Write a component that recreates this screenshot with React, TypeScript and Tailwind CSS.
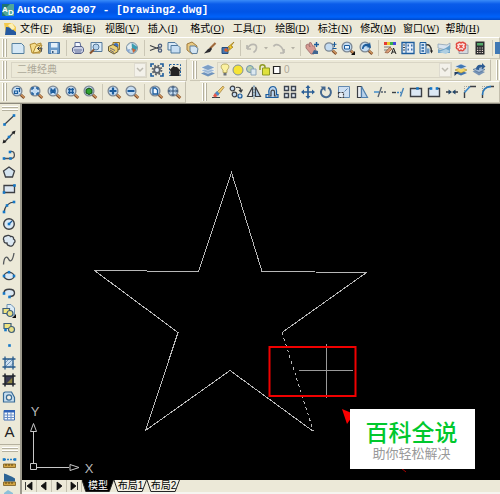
import type { ReactNode } from 'react';
import { clsx } from 'clsx';

type ToolItem = { label: string; art: ReactNode };

const MENUS = [
  ['文件', 'F'],
  ['编辑', 'E'],
  ['视图', 'V'],
  ['插入', 'I'],
  ['格式', 'O'],
  ['工具', 'T'],
  ['绘图', 'D'],
  ['标注', 'N'],
  ['修改', 'M'],
  ['窗口', 'W'],
  ['帮助', 'H'],
];

const BLUE = '#1c5c9c';
const INK = '#3c3f44';
const PALE = '#c9ddf0';

function Lens({ children, small = false }: { children?: ReactNode; small?: boolean }) {
  return (
    <>
      <path d="M10.500 10.500 14.300 14" stroke="#7a4a28" strokeWidth="2.800" />
      <path d="M11 10.500 14.500 13.700" stroke="#d49a62" strokeWidth="1.300" />
      <circle cx="7" cy="7" r={small ? 4.2 : 4.9} fill="#c4dcf2" stroke="#7d8894" strokeWidth="1.300" />
      {children}
    </>
  );
}

function Dots({ at }: { at: [number, number][] }) {
  return (
    <>
      {at.map(([x, y]) => (
        <rect key={`${x}-${y}`} x={x - 1.3} y={y - 1.3} width="2.6" height="2.6" fill="#1478c8" stroke="none" />
      ))}
    </>
  );
}

const FILE_TOOLS: ToolItem[] = [
  {
    label: '新建',
    art: <path d="M2 3.500h9.500l2.500 2.500v7.500H2z" fill="#d5e8f6" stroke="#56809f" />,
  },
  {
    label: '打开',
    art: (
      <>
        <path d="M2 4.500 7 3l1 1.500 5-1.500-1 10H4z" fill="#f5dc8a" stroke="#b08a32" />
        <path d="M5 13 8 6l6-1-3 7z" fill="#fbe9a8" stroke="#b08a32" />
        <path d="M14 8 9.500 8.500M14 8l-1 4M9.500 8.500l2-2M9.500 8.500l2 2" stroke={INK} />
      </>
    ),
  },
  {
    label: '保存',
    art: (
      <>
        <path d="M2.500 2.500h11v11h-11z" fill="#6b9bca" stroke="#4a76a4" />
        <path d="M5 3h6.500v4.500H5z" fill="#e4f0fa" />
        <path d="M5 10h6v3.500H5z" fill="#d5e3ef" />
        <path d="M6 11h1.500v2H6z" fill="#35587c" />
      </>
    ),
  },
];

const PRINT_TOOLS: ToolItem[] = [
  {
    label: '打印',
    art: (
      <>
        <path d="M5 2.500h5l1 5H5z" fill="#f3f7ff" stroke="#5c6c98" />
        <path d="M2.500 8 5 6.500h7l1.500 2v3L11 13.500H4.500l-2-2z" fill="#c9cfe4" stroke="#566189" />
        <path d="M4 10h8M5 12h6" stroke="#69749b" />
      </>
    ),
  },
  {
    label: '打印预览',
    art: (
      <>
        <path d="M3 2.500h11v9H3z" fill="#dcecf8" stroke="#54789a" />
        <circle cx="8" cy="7" r="3" fill="#b7d4ee" stroke="#54789a" />
        <path d="m6 9.500-4 4" stroke="#8a5430" strokeWidth="2" />
      </>
    ),
  },
  {
    label: '发布',
    art: (
      <>
        <path d="M7 2.500h6.500v7H7z" fill="#f4d67a" stroke="#9a7624" />
        <circle cx="10" cy="5.500" r="2.500" fill="#3c6fc0" />
        <path d="M2.500 6.500 7 4.500l5 3v4L8 14l-5.500-3z" fill="#e9cf74" stroke="#655a3a" />
        <path d="m4 8 5 2.500M4 10l4 2.500" stroke="#6d6a80" />
      </>
    ),
  },
  {
    label: '三维 DWF',
    art: (
      <>
        <circle cx="8" cy="8" r="5.500" fill="#b9d6e6" stroke="#8092a0" />
        <path d="M8 3.500 13.500 7 11 12 7 9z" fill="#3b9db0" />
        <path d="M3 6.500 7 3l1 5-3 3z" fill="#e6eef2" />
        <path d="m8 8 1 5 3-3z" fill="#cf6436" />
        <path d="m2 10 4-1-1 4z" fill="#86a6d0" />
      </>
    ),
  },
];

const EDIT_TOOLS: ToolItem[] = [
  {
    label: '剪切',
    art: (
      <>
        <path d="M2 5.500 11 9M2 10.500 11 7" stroke={INK} strokeWidth="1.300" />
        <circle cx="12" cy="5.800" r="1.600" fill="none" stroke="#475a7c" strokeWidth="1.300" />
        <circle cx="12" cy="10.500" r="1.600" fill="none" stroke="#475a7c" strokeWidth="1.300" />
      </>
    ),
  },
  {
    label: '复制',
    art: (
      <>
        <path d="M2 2.500h7l2 2V10H2z" fill="#d8e9f7" stroke="#4f789c" />
        <path d="M5 5.500h7l2 2V13H5z" fill="#c7def2" stroke="#4f789c" />
      </>
    ),
  },
  {
    label: '粘贴',
    art: (
      <>
        <path d="m3 4 5-2 5 4-1 6-4 2-5-4z" fill="#e8c980" stroke="#a07a3c" />
        <path d="M6 6h5l3 2.500-1 5H8L6 11z" fill="#d4e5f3" stroke="#607f9a" />
      </>
    ),
  },
  {
    label: '特性匹配',
    art: (
      <>
        <path d="M13.500 3 8 8.500" stroke="#a06a3c" strokeWidth="2.200" />
        <path d="M9 7.500 6 9l-4 4.500L8 12l2-3z" fill="#2c2c30" />
      </>
    ),
  },
  {
    label: '块编辑器',
    art: (
      <>
        <path d="M2 7.500h6v6H2z" fill="#4476b4" stroke="#274c7c" />
        <path d="m14 2-6 5 2 1-3 4 6-5-2-1z" fill="#f5cc2c" stroke="#9a7310" strokeWidth=".7" />
        <circle cx="6" cy="10" r="1.800" fill="#d95d2a" />
      </>
    ),
  },
];

const UNDO: ToolItem = {
  label: '放弃',
  art: <path d="M3 9V5m0 4h4M3.500 8.500C6 3 13 3 12.500 8c0 2-1.500 3.500-3 4.500" fill="none" stroke="#b9b7b0" strokeWidth="1.700" />,
};

const REDO: ToolItem = {
  label: '重做',
  art: <path d="M13 13V9m0 4H9m3.500-.500C12 6 5 2 2.500 6.500" fill="none" stroke="#b9b7b0" strokeWidth="1.700" />,
};

const VIEW_TOOLS: ToolItem[] = [
  {
    label: '实时平移',
    art: (
      <>
        <path d="M2 5 4 4l2 3-1-4 2-.500 2 4 1-1 2 5-2 3.500H7L2 8z" fill="#d79a92" stroke="#9d6a68" strokeWidth=".8" />
        <path d="M12.500 2v5M10 4.500h5" stroke={BLUE} strokeWidth="1.400" />
        <path d="m8 14 2-4 4 1v3z" fill="#3f6692" />
      </>
    ),
  },
  {
    label: '实时缩放',
    art: (
      <Lens small>
        <path d="M12.500 2v5M10.500 4.300h4M10.500 8.500h4" stroke={BLUE} />
      </Lens>
    ),
  },
  {
    label: '窗口缩放',
    art: (
      <Lens>
        <path d="M4.500 5.500h5v3.500h-5z" fill="#e9f4ff" stroke={BLUE} />
        <path d="M15 11v4h-4z" fill="#111" />
      </Lens>
    ),
  },
  {
    label: '缩放上一个',
    art: (
      <Lens>
        <path d="M4 9c0-5 4-6 7-5l1-2 1 6-5-1 2-1c-3-.500-4 .500-4.500 3z" fill={BLUE} />
      </Lens>
    ),
  },
];

const PALETTE_TOOLS: ToolItem[] = [
  {
    label: '特性',
    art: (
      <>
        <path d="M2 2h3v3H2z" fill="#e63a32" />
        <path d="M5 2h3v3H5z" fill="#e8c92e" />
        <path d="M8 2h3v3H8z" fill="#36b04a" />
        <path d="M11 2h3v3h-3z" fill="#4748dc" />
        <path d="M2 7h7M2 10h4" stroke="#777" />
        <path d="M3 12.500 8 7l2 2-4 4z" fill="#d99d78" stroke="#8a563a" strokeWidth=".7" />
        <path d="m9.500 14 2-6 2.500 6m-4-2h3" fill="none" stroke="#222" />
      </>
    ),
  },
  {
    label: '设计中心',
    art: (
      <>
        <path d="M2 2.500h12v11H2z" fill="#e4eef9" stroke={BLUE} strokeWidth="1.300" />
        <path d="M6 3v10" stroke={BLUE} />
        <path d="M3 5h2M3 7.500h2M3 10h2" stroke="#444" />
        <path d="M7.500 4.500H9v2H7.500zM11 4.500h1.500v2H11zM7.500 8.500H9v2H7.500zM11 8.500h1.500v2H11z" fill="#3d6fae" />
      </>
    ),
  },
  {
    label: '工具选项板',
    art: (
      <>
        <path d="M2 2.500h6v11H2z" fill="#d5e5f5" stroke={BLUE} />
        <path d="M3.500 5H6M3.500 8H6M3.500 11H6" stroke={BLUE} strokeWidth="1.500" />
        <path d="M8 5c3-1 5 1 5.500 6" fill="none" stroke="#333" strokeWidth="1.300" />
        <path d="M9 8.500h2.500v5H9z" fill="#6e9bc8" />
        <path d="M12 10.500h3l-1.500 3z" fill="#222" />
      </>
    ),
  },
  {
    label: '图纸集',
    art: (
      <>
        <path d="m2 4 9 1 3-2v6l-4 1-8-2z" fill="#d8e3ee" stroke="#8ea3b6" strokeWidth=".8" />
        <path d="M2 9c4 2 8-1 12-4v8H2z" fill="#6fa3c8" />
        <path d="m3 12 7-3 4 2-4 3z" fill="#afcfe2" />
      </>
    ),
  },
  {
    label: '标记集',
    art: (
      <>
        <path d="M5 5h9v8.500H5z" fill="#d5d9df" stroke="#9b9fa8" />
        <path d="M4 3c1-1 2-1 3 0 1-1 3-1 3 0 2 0 2 2 1 3 1 2 0 3-1 3 0 2-2 2-3 1-1 1-3 1-3-1-2 0-2-2-1-3-1-1-1-3 1-3z" fill="#fbe3e0" stroke="#e2483f" strokeWidth="1.500" />
        <path d="m5.500 5 3 3m0-3-3 3" stroke="#e2483f" strokeWidth="1.300" />
      </>
    ),
  },
  {
    label: '快速计算器',
    art: (
      <>
        <path d="M3.500 1.500h9v13h-9z" fill="#2c2c2e" />
        <path d="M5 3h6v2.500H5z" fill="#52a868" />
        <path d="M5 8h6M5 10.300h6M5 12.500h6" stroke="#e9d9d4" strokeWidth="1.200" strokeDasharray="1.200 1.200" />
      </>
    ),
  },
];

const WORKSPACE_TOOLS: ToolItem[] = [
  {
    label: '工作空间设置',
    art: (
      <>
        <path d="M2 5V2h3M11 2h3v3M14 11v3h-3M5 14H2v-3" fill="none" stroke={BLUE} strokeWidth="1.600" />
        <circle cx="8" cy="8" r="4.400" fill="none" stroke="#5c646c" strokeWidth="2" strokeDasharray="1.800 1.650" />
        <circle cx="8" cy="8" r="2.800" fill="#e9eef2" stroke="#5c646c" strokeWidth="1.800" />
      </>
    ),
  },
  {
    label: '我的工作空间',
    art: (
      <>
        <path d="M2.500 2.500h11v11h-11z" fill="none" stroke={BLUE} strokeDasharray="2 1.500" />
        <path d="m2.500 8 4-4 1.500 1h2l4 4h-1.500v5h-9V9z" fill="#242424" />
      </>
    ),
  },
];

const LAYERS: ToolItem = {
  label: '图层特性管理器',
  art: (
    <>
      <path d="m1 11.500 7-3 7 3-7 3z" fill="#6e93bd" />
      <path d="m1 8.500 7-3 7 3-7 3z" fill="#9dbad8" stroke="#fff" strokeWidth=".5" />
      <path d="m1 5.500 7-3 7 3-7 3z" fill="#7d9fc6" stroke="#fff" strokeWidth=".5" />
    </>
  ),
};

const LAYER_TOOLS: ToolItem[] = [
  {
    label: '将对象的图层置为当前',
    art: (
      <>
        <path d="m2 11 6-2.500 6 2.500-6 2.500z" fill="#3f74b0" />
        <path d="m2 8 6-2.500L14 8l-6 3z" fill="#f3d768" stroke="#ab8724" strokeWidth=".6" />
        <path d="m2 4.500 6-2.500 6 2.500L8 7z" fill="#4177b4" stroke="#e9eef5" strokeWidth=".6" />
        <path d="M1.500 10h4l-4 4z" fill="#223c60" />
      </>
    ),
  },
  {
    label: '上一个图层',
    art: (
      <>
        <path d="m1.500 9.500 6-2 6.500 2.500-6 3.500z" fill="#7693b6" />
        <path d="m2 7.500 6-2.500 6 2.500-6 3z" fill="#a2bad6" stroke="#47658c" strokeWidth=".6" />
        <path d="M5 7.500C5 3 8 2 11 3V1l3.500 3.500L11 7.500v-2c-2-.500-3 0-3 2.500z" fill="#2e5c94" />
      </>
    ),
  },
];

const ZOOM_TOOLS: ToolItem[] = [
  { label: '窗口缩放', art: <Lens><path d="M4.500 7h3v2.500h-3zM6 4.500h3.500V8" fill="none" stroke={BLUE} strokeWidth="1.200" /></Lens> },
  { label: '动态缩放', art: <Lens><path d="M4 6V4h2M8 4h2v2M10 8v2H8M6 10H4V8" fill="none" stroke={BLUE} strokeWidth="1.300" /></Lens> },
  { label: '比例缩放', art: <Lens><path d="m4.500 4.500 5 5m0-5-5 5M4 7h1.500M8.500 7H10" fill="none" stroke={BLUE} strokeWidth="1.600" /></Lens> },
  { label: '中心缩放', art: <Lens><path d="M5.500 4v6M8.500 4v6M4 5.500h6M4 8.500h6" fill="none" stroke={BLUE} strokeWidth="1.400" /></Lens> },
  { label: '缩放对象', art: <Lens><path d="m7 4 3 1.500v3.500l-3 1.500L4 9V5.500z" fill="#2fa32e" stroke="#12470f" /></Lens> },
];

const ZOOM_STEP_TOOLS: ToolItem[] = [
  { label: '放大', art: <Lens><path d="M7 3.500v7M3.500 7h7" stroke={BLUE} strokeWidth="2.200" /></Lens> },
  { label: '缩小', art: <Lens><path d="M3.500 7h7" stroke={BLUE} strokeWidth="2" /></Lens> },
];

const ZOOM_FIT_TOOLS: ToolItem[] = [
  { label: '全部缩放', art: <Lens><path d="M5 4h2.500L9.500 6v4H5z" fill="#f4f9ff" stroke={BLUE} strokeWidth="1.300" /></Lens> },
  { label: '范围缩放', art: <Lens><path d="M7 2.500v9M2.500 7h9M5.500 4 7 2.500 8.500 4M5.500 10 7 11.500 8.500 10M4 5.500 2.500 7 4 8.500M10 5.500 11.500 7 10 8.500" fill="none" stroke="#2c4e74" /></Lens> },
];

const MODIFY_TOOLS: ToolItem[] = [
  {
    label: '删除',
    art: (
      <>
        <path d="M2 13.500h8" stroke={INK} />
        <path d="m13 2-6 6 1.500 2.500 5.500-7z" fill="#f0cd70" stroke="#9c7a34" strokeWidth=".7" />
        <path d="m7 7 2.500 2.500L8 12 4.500 9.500z" fill="#4d88c4" />
        <path d="M5 9 7.500 12 5 13.500 3 12z" fill="#e4574a" />
      </>
    ),
  },
  {
    label: '复制对象',
    art: (
      <>
        <circle cx="4.500" cy="4.500" r="2.300" fill={PALE} stroke={INK} strokeWidth="1.200" />
        <circle cx="6.500" cy="10.500" r="2.300" fill={PALE} stroke={INK} strokeWidth="1.200" />
        <circle cx="12" cy="12" r="2" fill={PALE} stroke={BLUE} strokeWidth="1.200" />
        <path d="M8 3.500c4-1 5 1 5 4M11 6l2 2 1.500-2.500" fill="none" stroke={INK} strokeWidth="1.200" />
      </>
    ),
  },
  {
    label: '镜像',
    art: (
      <>
        <path d="M6.500 3v9.500h-5z" fill="#eee" stroke={INK} strokeWidth="1.200" />
        <path d="M9.500 3v9.500h5z" fill="#b3cfe9" stroke={INK} strokeWidth="1.200" />
        <path d="M8 1.500v13" stroke={BLUE} strokeDasharray="2 1" />
      </>
    ),
  },
  {
    label: '偏移',
    art: (
      <>
        <path d="M2 13.500v-3h3C4 5 6 2.500 9 2.500s4 3 3.500 8H14v3z" fill="#b9d4ee" stroke={BLUE} strokeWidth="1.200" />
        <path d="M4 12h3V8c0-2.500 3.500-2.500 3.500 0v4h2" fill="none" stroke={INK} strokeWidth="1.200" />
      </>
    ),
  },
  {
    label: '阵列',
    art: <path d="M2.500 2.500h4v4h-4zM9.500 2.500h4v4h-4zM2.500 9.500h4v4h-4zM9.500 9.500h4v4h-4z" fill="#e4edf5" stroke="#3c4450" strokeWidth="1.400" />,
  },
  {
    label: '移动',
    art: (
      <>
        <path d="M8 3v10M3 8h10" stroke="#2b5f96" strokeWidth="1.700" />
        <path d="m8 1 2.500 3h-5zM8 15l2.500-3h-5zM1 8l3-2.500v5zM15 8l-3-2.500v5z" fill="#2b5f96" />
      </>
    ),
  },
  {
    label: '旋转',
    art: (
      <>
        <path d="M5 4.200a5 5 0 1 0 5-.500" fill="none" stroke="#44688f" strokeWidth="2" />
        <path d="M2.500 2.500h5v5z" fill="#44688f" />
      </>
    ),
  },
  {
    label: '缩放',
    art: (
      <>
        <path d="M2.500 2.500h11v11h-11z" fill="#cfe0f2" stroke="#6289b0" />
        <path d="M2.500 8.500h5v5h-5z" fill="#e9eff5" stroke={INK} strokeWidth="1.200" strokeDasharray="2 1" />
        <path d="m8.500 7.500 3-3" stroke="#6289b0" />
      </>
    ),
  },
  {
    label: '拉伸',
    art: (
      <>
        <path d="M3.500 2.500h4v11h-4z" fill="#e9edf0" stroke={INK} strokeWidth="1.200" />
        <path d="M7.500 2.500 13.500 13.500h-6z" fill="#b9d2ea" stroke="#4f7fad" strokeWidth="1.200" />
      </>
    ),
  },
  {
    label: '修剪',
    art: (
      <>
        <path d="M2 8h5" stroke="#3987c9" strokeWidth="1.400" />
        <path d="M9 8h5" stroke="#55606c" strokeWidth="1.300" strokeDasharray="2 1" />
        <path d="M9.500 3 6 13" stroke="#55606c" strokeWidth="1.300" />
      </>
    ),
  },
  {
    label: '延伸',
    art: (
      <>
        <path d="M2 8.500h4" stroke={INK} strokeWidth="1.400" />
        <path d="M7 8.500h4" stroke="#3987c9" strokeWidth="1.400" strokeDasharray="2 1" />
        <path d="m13.500 4-3 8.500" stroke="#4783b8" strokeWidth="1.400" />
      </>
    ),
  },
  {
    label: '打断于点',
    art: (
      <>
        <path d="M2.500 4.500h11v8h-11z" fill="#dce8f4" stroke={INK} strokeWidth="1.400" />
        <Dots at={[[9.500, 4.500]]} />
      </>
    ),
  },
  {
    label: '打断',
    art: (
      <>
        <path d="M5 4.500H2.500v8h11v-8H11" fill="#dce8f4" stroke={INK} strokeWidth="1.400" />
        <Dots at={[[5, 4.500], [11, 4.500]]} />
      </>
    ),
  },
  {
    label: '合并',
    art: (
      <>
        <path d="M2 8h3M11 8h3" stroke={INK} strokeWidth="1.600" />
        <path d="M4.500 5.500 8 8l-3.500 2.500zM11.500 5.500 8 8l3.500 2.500z" fill="#24486c" />
      </>
    ),
  },
  {
    label: '倒角',
    art: (
      <>
        <path d="M2.500 14V8M8 2.500h6" stroke={INK} strokeWidth="1.400" />
        <path d="M2.500 8.500 8 2.500" stroke="#3987c9" strokeWidth="1.600" />
        <path d="M2.500 7V2.500H7" fill="none" stroke="#999" strokeDasharray="1 1" />
      </>
    ),
  },
  {
    label: '圆角',
    art: (
      <>
        <path d="M2.500 14v-3M11 2.500h3" stroke={INK} strokeWidth="1.400" />
        <path d="M2.500 11c0-5 3-8.500 8.500-8.500" fill="none" stroke="#2b78b8" strokeWidth="1.800" />
        <path d="M2.500 7V2.500H7" fill="none" stroke="#999" strokeDasharray="1 1" />
      </>
    ),
  },
];

const DRAW_TOOLS: ToolItem[] = [
  { label: '直线', art: <><path d="M3.500 12.500 13 3.500" stroke={INK} strokeWidth="1.200" /><Dots at={[[3.500, 12.500], [13, 3.500]]} /></> },
  {
    label: '构造线',
    art: (
      <>
        <path d="M3 13.500 13 3" stroke={INK} strokeWidth="1.300" />
        <path d="m14.500 1.500-1 4-3-2.500zM1.500 14.500l1-4 3 2.500z" fill="#222" />
        <Dots at={[[8, 8]]} />
      </>
    ),
  },
  {
    label: '多段线',
    art: (
      <>
        <path d="M3 11.500h8M9 4.500c5-1.500 6 6 1.500 7" fill="none" stroke="#4c5258" strokeWidth="1.300" />
        <Dots at={[[3, 11.500], [9.500, 11.500], [9, 5]]} />
      </>
    ),
  },
  { label: '正多边形', art: <path d="m8 3 5.500 4-2 6h-7l-2-6z" fill="#d4e3ef" stroke={INK} strokeWidth="1.300" /> },
  { label: '矩形', art: <><path d="M3 4.500h10.500v7H3z" fill="#dbe6f1" stroke={INK} strokeWidth="1.300" /><Dots at={[[3, 11.500], [13.500, 4.500]]} /></> },
  { label: '圆弧', art: <><path d="M3 13.500C3.500 7 8 3 13.500 3" fill="none" stroke={INK} strokeWidth="1.200" /><Dots at={[[3, 13], [6, 6.500], [13, 3]]} /></> },
  { label: '圆', art: <><circle cx="8" cy="8" r="5.300" fill="#dae8f4" stroke={INK} strokeWidth="1.400" /><path d="m8 8 3-3" stroke={BLUE} strokeWidth="1.300" /><Dots at={[[8, 8]]} /></> },
  {
    label: '修订云线',
    art: <path d="M5 3c1-1 4-1 4.500.500 2-.500 3.500 1 3 2.500 2 1 2 3 .500 4-.500 3-3 4-5 2.500-1.500 0-2-1-2-2.500-2 .500-3.500-1-3-2.500C1.500 5.500 3 3 5 3z" fill="#dce8f2" stroke={INK} strokeWidth="1.300" />,
  },
  { label: '样条曲线', art: <path d="M2.500 13.500C3 5 6 5 7.500 8s4 3 5.500-6" fill="none" stroke="#55595c" strokeWidth="1.300" /> },
  { label: '椭圆', art: <><ellipse cx="8" cy="8" rx="5" ry="3.600" fill="#dbe8f3" stroke={INK} strokeWidth="1.400" /><Dots at={[[3, 8], [13, 8], [8, 4.200]]} /></> },
  { label: '椭圆弧', art: <><path d="M3 8c0-5 10.500-5 10.500 0 0 2.500-2 3.500-5 3.500" fill="#dbe8f3" stroke={INK} strokeWidth="1.400" /><Dots at={[[3, 8.500], [8.500, 12]]} /></> },
  {
    label: '插入块',
    art: (
      <>
        <path d="M6 1.500h4L13.500 5v7H6z" fill="#dcebf6" stroke="#6f93b2" />
        <path d="M2 5.500h6.500v5H2z" fill="#efe480" stroke="#3f5f78" strokeWidth="1.200" />
        <circle cx="9" cy="10.500" r="3" fill="#e8df86" stroke="#3f5f78" strokeWidth="1.200" />
        <path d="M15 11v4h-4z" fill="#111" />
      </>
    ),
  },
  {
    label: '创建块',
    art: (
      <>
        <path d="M3 3.500h7v5H3z" fill="#efe480" stroke="#3f5f78" strokeWidth="1.200" />
        <circle cx="10.500" cy="9.500" r="3" fill="#e8df86" stroke="#3f5f78" strokeWidth="1.200" />
        <Dots at={[[4.500, 10]]} />
      </>
    ),
  },
  { label: '点', art: <Dots at={[[8.500, 8.500]]} /> },
  {
    label: '图案填充',
    art: (
      <>
        <path d="M4 4h8.500v8.500H4z" fill="#cfe1f1" />
        <path d="m4 8 4-4m-4 8 8-8m-4 8.500 4.500-4.500" stroke="#5f87ad" strokeWidth=".8" />
        <path d="M4 1.500v13M12 1.500v13M1.500 4h13M1.500 12h13" stroke="#275a8a" strokeWidth="1.300" />
      </>
    ),
  },
  {
    label: '渐变色',
    art: (
      <>
        <path d="M4 4h8.500v8.500H4z" fill="#3a3a52" />
        <path d="M5 12 12 5v7z" fill="#8c8340" />
        <path d="M4 1.500v13M12 1.500v13M1.500 4h13M1.500 12h13" stroke="#20242c" strokeWidth="1.500" />
      </>
    ),
  },
  {
    label: '面域',
    art: (
      <>
        <path d="M2.500 13V4L4 3h6.500l3 5.500V13z" fill="#c8deef" stroke="#386b96" strokeWidth="1.200" />
        <circle cx="8" cy="8.500" r="2.600" fill="#f1efe6" stroke="#386b96" strokeWidth="1.200" />
      </>
    ),
  },
  {
    label: '表格',
    art: (
      <>
        <path d="M3 3.500h10.500v9.500H3z" fill="#f5f8fc" stroke="#3d6db5" />
        <path d="M3 3h11v2.500H3z" fill="#2f62b8" />
        <path d="M3 8h10.500M3 10.500h10.500M6.500 5v8M10 5v8" stroke="#6c90c8" />
      </>
    ),
  },
  {
    label: '多行文字',
    art: (
      <text x="8.500" y="13" textAnchor="middle" fontFamily="Liberation Sans" fontSize="15" fill="#222">
        A
      </text>
    ),
  },
];

const DIMENSION_TOOLS: ToolItem[] = [
  {
    label: '距离',
    art: (
      <>
        <path d="M3 5.500h11" stroke="#2f7fc0" strokeDasharray="2 1" strokeWidth="1.300" />
        <Dots at={[[3, 5.500], [14, 5.500]]} />
        <path d="M2.500 10h12v3.500h-12z" fill="#d3a544" stroke="#7a5a1c" strokeWidth=".8" />
        <path d="M5 10v2M8 10v2M11 10v2" stroke="#5f4512" />
      </>
    ),
  },
  {
    label: '区域',
    art: (
      <>
        <path d="M3 2.500c3 1 7 2.500 11 5v3H3z" fill="#2d6494" />
        <path d="M2.500 11h12v3.500h-12z" fill="#d3a544" stroke="#7a5a1c" strokeWidth=".8" />
        <path d="M5 11v2M8 11v2M11 11v2" stroke="#5f4512" />
      </>
    ),
  },
  { label: '列表', art: <path d="m3 5 4-3 5 3v7H3z" fill="#8cc0da" /> },
];

function ToolButton({ label, art }: ToolItem) {
  return (
    <button type="button" aria-label={label} className="grid h-4 w-[18px] shrink-0 place-items-center">
      <svg viewBox="0 0 16 16" className="size-4" aria-hidden>
        {art}
      </svg>
    </button>
  );
}

function Tools({ items }: { items: ToolItem[] }) {
  return (
    <>
      {items.map((item) => (
        <ToolButton key={item.label} {...item} />
      ))}
    </>
  );
}

function Grip() {
  return (
    <span className="flex h-full w-[9px] shrink-0 gap-px py-px pl-[2px]">
      <span className="w-[2px] border-r border-[#b5b19f] bg-white" />
      <span className="w-[2px] border-r border-[#b5b19f] bg-white" />
    </span>
  );
}

function SideGrip() {
  return (
    <span className="flex h-2 shrink-0 flex-col gap-px px-[2px] pt-[2px]">
      <span className="h-[2px] border-b border-[#b5b19f] bg-white" />
      <span className="h-[2px] border-b border-[#b5b19f] bg-white" />
    </span>
  );
}

function Divider() {
  return (
    <span className="flex h-4 w-[6px] shrink-0 justify-center">
      <span className="w-px bg-[#cbc7b6]" />
    </span>
  );
}

function Toolbar({ label, grow = false, children }: { label: string; grow?: boolean; children: ReactNode }) {
  return (
    <div
      role="toolbar"
      aria-label={label}
      className={clsx(
        'flex h-[22px] items-center border-t border-r border-b border-t-white border-r-[#c3bfae] border-b-[#cbc7b5] pr-[2px]',
        grow ? 'min-w-0 flex-1' : 'shrink-0',
      )}
    >
      <Grip />
      {children}
    </div>
  );
}

function DropArrow() {
  return (
    <span className="pointer-events-none absolute inset-y-px right-px grid w-3 place-items-center border border-[#dedbd0] bg-[#f3f1ea]">
      <svg viewBox="0 0 8 6" className="h-[6px] w-2" aria-hidden>
        <path d="m1 1 3 3 3-3" fill="none" stroke="#bdbab0" strokeWidth="1.500" />
      </svg>
    </span>
  );
}

function HistoryArrow({ label }: { label: string }) {
  return (
    <button type="button" aria-label={label} className="grid h-4 w-[9px] shrink-0 place-items-center">
      <svg viewBox="0 0 6 4" className="h-1 w-[6px]" aria-hidden>
        <path d="M1 1h4L3 3.500z" fill="#b5b2a6" />
      </svg>
    </button>
  );
}

function LayerState() {
  return (
    <svg viewBox="0 0 66 16" className="pointer-events-none absolute left-[2px] top-0 h-4 w-[66px]" aria-hidden>
      <path d="M6 2c-5 0-4.500 4-2 6v2.500h4V8c2.500-2 3-6-2-6z" fill="#fbf1a0" stroke="#a89a50" strokeWidth=".8" />
      <path d="M4.500 11h3v2.500h-3z" fill="#6c7278" />
      <circle cx="19" cy="8" r="5" fill="#f6e436" stroke="#7c8fa0" />
      <circle cx="31" cy="7" r="3.500" fill="#b9d0a8" stroke="#6d93b0" />
      <path d="M32 7h5v6h-5z" fill="#dce8f0" stroke="#8aa4ba" />
      <path d="M41 8V5c0-3 5-3 5 0v1" fill="none" stroke="#8f9a24" strokeWidth="1.500" />
      <path d="M43.500 6h7v7h-7z" fill="#dfe13c" stroke="#8f9a24" />
      <path d="M54.500 4.500h6.500v7h-6.500z" fill="#fff" stroke="#222" strokeWidth="1.200" />
    </svg>
  );
}

function SheetTab({ label, width, active = false }: { label: string; width: 'short' | 'long'; active?: boolean }) {
  return (
    <button
      type="button"
      role="tab"
      aria-selected={active}
      className={clsx(
        'relative h-3 shrink-0 text-[10px] leading-3',
        width === 'short' ? 'w-8' : 'w-[33px]',
        active ? 'text-white' : 'text-black',
      )}
    >
      <svg viewBox="0 0 34 12" preserveAspectRatio="none" className="absolute inset-0 size-full" aria-hidden>
        <path d="M0 0 4 11.500h25L33.500 0" fill={active ? '#000' : '#f3f0e3'} stroke="#222" />
      </svg>
      <span className="relative whitespace-nowrap">{label}</span>
    </button>
  );
}

const SHEET_NAV = [
  { label: '第一个', path: 'M3.500 2v8M10 2v8L5 6z' },
  { label: '上一个', path: 'M9 2v8L4 6z' },
  { label: '下一个', path: 'M5 2v8l5-4z' },
  { label: '最后一个', path: 'M10.500 2v8M4 2v8l5-4z' },
];

function DrawingCanvas() {
  return (
    <svg className="block size-full" aria-label="五角星">
      <g fill="none" stroke="#b8b8b8" shapeRendering="crispEdges">
        <path d="M260 228.500 344.500 168.500 240 167.500 209.500 68.500 176.500 167.500 72.500 166.500 156 228.500 123.500 326.500 208 266.500 291.500 327.500" />
        <path d="M260 228.500 291.500 327.500" strokeDasharray="3 3" />
      </g>
      <g fill="none" stroke="#9a9a9a">
        <path d="M304.500 240v54M277 266.500h54" />
      </g>
      <rect x="247.500" y="243" width="86" height="49" fill="none" stroke="#f00000" strokeWidth="2" />
      <path d="m320 305 12 5-7 10z" fill="#fa0000" />
      <path d="m379 364 5 4" stroke="#a80000" />
      <g fill="none" stroke="#c8c8c8">
        <path d="M8.500 359.500h6v6h-6zM11.500 359v-32M15 363.500h32" />
        <path d="m11.500 319.500-3 8h6zM57 363.500l-9-3v6z" />
      </g>
      <g fontFamily="Liberation Sans" fontSize="13" fill="#b8b8b8" textAnchor="middle">
        <text x="13" y="312">Y</text>
        <text x="67" y="369">X</text>
      </g>
    </svg>
  );
}

export default function App() {
  return (
    <div className="flex h-screen flex-col overflow-hidden bg-[#ece9d8] font-['Liberation_Sans','Noto_Sans_CJK_SC',sans-serif] text-black">
      <header className="flex h-5 shrink-0 items-center gap-[3px] bg-[linear-gradient(#3a8cf8,#0a5cea_20%,#0054e6_60%,#0062fa_85%,#0048c8)] pl-[2px]">
        <svg viewBox="0 0 12 12" className="size-3" aria-hidden>
          <path d="M0 0h12v12H0z" fill="#1d7373" />
          <path d="M0 8 8 0h4v12H4z" fill="#4fa69b" />
          <g fontFamily="Liberation Sans" fontWeight="700" fill="#fff">
            <text x="0" y="8" fontSize="8">A</text>
            <text x="6" y="11" fontSize="8">D</text>
          </g>
        </svg>
        <h1 className="whitespace-nowrap font-['Liberation_Mono',monospace] text-[11px] font-bold leading-4 text-white">
          AutoCAD 2007 - [Drawing2.dwg]
        </h1>
      </header>

      <nav aria-label="主菜单" className="flex h-[17px] shrink-0 items-center pl-1">
        <svg viewBox="0 0 12 14" className="mr-1 h-[14px] w-3 shrink-0" aria-hidden>
          <path d="M0 1h8l4 4v8H2z" fill="#f2c94c" />
          <path d="M2 5c4 0 6 2 10 5v3H1z" fill="#2559a0" />
          <path d="m4 3 4-2 3 5-3 2z" fill="#fdf0b4" />
        </svg>
        <div className="grid flex-1 grid-cols-11 pr-3">
          {MENUS.map(([name, key]) => (
            <button key={key} type="button" className="whitespace-nowrap text-left text-[10px] leading-4">
              {name}
              <span className="font-['Liberation_Serif',serif]">
                (<u>{key}</u>)
              </span>
            </button>
          ))}
        </div>
      </nav>

      <div className="flex shrink-0 overflow-hidden">
        <Toolbar label="标准" grow>
          <Tools items={FILE_TOOLS} />
          <Divider />
          <Tools items={PRINT_TOOLS} />
          <Divider />
          <Tools items={EDIT_TOOLS} />
          <Divider />
          <ToolButton {...UNDO} />
          <HistoryArrow label="放弃列表" />
          <ToolButton {...REDO} />
          <HistoryArrow label="重做列表" />
          <Divider />
          <Tools items={VIEW_TOOLS} />
          <Divider />
          <Tools items={PALETTE_TOOLS} />
          <Divider />
          <span className="h-3 w-3 shrink-0 bg-[#3f78b4]" />
        </Toolbar>
      </div>

      <div className="flex shrink-0 gap-[3px]">
        <Toolbar label="工作空间">
          <label className="relative ml-[2px] mr-px block w-[136px]">
            <select
              disabled
              aria-label="工作空间"
              className="block h-4 w-full appearance-none border border-[#d9d5c5] bg-[#ece9d8] pl-[5px] text-[10px] leading-[14px] text-[#aca899] opacity-100"
            >
              <option>二维经典</option>
            </select>
            <DropArrow />
          </label>
          <Tools items={WORKSPACE_TOOLS} />
        </Toolbar>
        <Toolbar label="图层" grow>
          <ToolButton {...LAYERS} />
          <label className="relative block min-w-0 flex-1">
            <select
              disabled
              aria-label="图层"
              className="block h-4 w-full appearance-none border border-[#d9d5c5] bg-[#ece9d8] pl-[66px] text-[10px] leading-[14px] text-[#aca899] opacity-100"
            >
              <option>0</option>
            </select>
            <LayerState />
            <DropArrow />
          </label>
          <Tools items={LAYER_TOOLS} />
        </Toolbar>
        <span className="flex w-[6px] overflow-hidden">
          <Grip />
        </span>
      </div>

      <div className="flex shrink-0 gap-[14px] overflow-hidden">
        <Toolbar label="缩放">
          <Tools items={ZOOM_TOOLS} />
          <Divider />
          <Tools items={ZOOM_STEP_TOOLS} />
          <Divider />
          <Tools items={ZOOM_FIT_TOOLS} />
        </Toolbar>
        <Toolbar label="修改" grow>
          <Tools items={MODIFY_TOOLS} />
        </Toolbar>
      </div>

      <div className="flex min-h-0 flex-1 border-t border-[#8d8a7e]">
        <aside className="flex w-[22px] shrink-0 flex-col overflow-hidden border-r-2 border-[#9c998c]">
          <div role="toolbar" aria-label="绘图" className="flex min-h-0 flex-1 flex-col border-b border-[#b5b19f] pb-1">
            <SideGrip />
            <div className="flex flex-1 flex-col justify-between">
              <Tools items={DRAW_TOOLS} />
            </div>
          </div>
          <div role="toolbar" aria-label="查询" className="flex h-[49px] shrink-0 flex-col gap-px overflow-hidden">
            <SideGrip />
            <Tools items={DIMENSION_TOOLS} />
          </div>
        </aside>

        <div className="flex min-w-0 flex-1 flex-col">
          <main className="relative min-h-0 flex-1 overflow-hidden bg-black">
            <DrawingCanvas />
            <div className="absolute bottom-[11px] right-[25px] flex h-[60px] w-[125px] flex-col items-center justify-center bg-white pt-1 pr-[2px]">
              <strong className="text-[23px] font-medium leading-[26px] text-[#00c82d]">百科全说</strong>
              <span className="text-[13px] leading-4 text-[#999999]">助你轻松解决</span>
            </div>
          </main>
          <footer className="flex h-[14px] shrink-0 border-b-2 border-[#f6f5f0]">
            {SHEET_NAV.map(({ label, path }) => (
              <button key={label} type="button" aria-label={label} className="h-3 w-[15px] border-r border-[#c5c1b0]">
                <svg viewBox="0 0 14 12" className="h-3 w-[14px]" aria-hidden>
                  <path d={path} fill="#111" stroke="#111" strokeWidth=".8" />
                </svg>
              </button>
            ))}
            <div role="tablist" aria-label="布局" className="flex">
              <SheetTab label="模型" width="short" active />
              <SheetTab label="布局1" width="long" />
              <SheetTab label="布局2" width="long" />
            </div>
          </footer>
        </div>
      </div>
    </div>
  );
}
